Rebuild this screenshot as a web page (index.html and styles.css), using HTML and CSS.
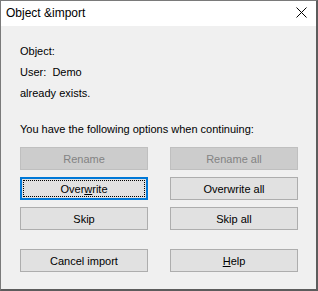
FILE: index.html
```html
<!DOCTYPE html>
<html lang="en">
<head>
  <meta charset="UTF-8">
  <title>Object &amp;import</title>
  <link rel="stylesheet" href="styles.css">
</head>
<body>
  <div class="window">
    <div class="titlebar">
      <span class="title">Object &amp;import</span>
      <svg class="close" width="11" height="11" viewBox="0 0 11 11">
        <path d="M0.5 0.5 L10.5 10.5 M10.5 0.5 L0.5 10.5" stroke="#000" stroke-width="1" fill="none"/>
      </svg>
    </div>

    <div class="content">
      <p class="line">Object:</p>
      <p class="line">User:&nbsp; Demo</p>
      <p class="line">already exists.</p>

      <p class="line options">You have the following options when continuing:</p>

      <div class="buttons">
        <button class="btn" disabled>Rename</button>
        <button class="btn" disabled>Rename all</button>
        <button class="btn focused"><span class="focus-ring">Over<u>w</u>rite</span></button>
        <button class="btn">Overwrite all</button>
        <button class="btn">Skip</button>
        <button class="btn">Skip all</button>
      </div>

      <div class="buttons bottom">
        <button class="btn">Cancel import</button>
        <button class="btn"><u>H</u>elp</button>
      </div>
    </div>
  </div>
</body>
</html>
```

FILE: styles.css
```css
body {
  margin: 0;
  padding: 0;
  background: #f0f0f0;
  font-family: 'Liberation Sans', Arial, sans-serif;
}

.window {
  width: 318px;
  height: 291px;
  box-sizing: border-box;
  border-top: 1px solid #7a7a7a;
  border-left: 1px solid #7a7a7a;
  border-right: 2px solid #5c5c5c;
  border-bottom: 2px solid #5c5c5c;
  background: #f0f0f0;
}

.titlebar {
  height: 25px;
  background: #fff;
  display: flex;
  align-items: center;
  justify-content: space-between;
  padding: 0 9px 0 5px;
}

.title {
  font-size: 12px;
  color: #000;
  margin-top: -1px;
}

.close {
  display: block;
  margin-top: -2px;
}

.content {
  padding: 15px 17px 0 19px;
}

.line {
  margin: 0;
  font-size: 11px;
  line-height: 21px;
  color: #000;
}

.options {
  margin-top: 15px;
}

.buttons {
  display: grid;
  grid-template-columns: 128px 128px;
  column-gap: 22px;
  row-gap: 7px;
  margin-top: 7px;
}

.buttons.bottom {
  margin-top: 19px;
}

.btn {
  height: 23px;
  padding: 0;
  font-family: inherit;
  font-size: 11px;
  color: #000;
  background: #e1e1e1;
  border: 1px solid #adadad;
  border-radius: 0;
  display: flex;
  align-items: center;
  justify-content: center;
}

.btn:disabled {
  background: #cccccc;
  border-color: #bfbfbf;
  color: #838383;
}

.btn.focused {
  border: 2px solid #0078d7;
  padding: 1px;
}

.focus-ring {
  flex: 1;
  align-self: stretch;
  display: flex;
  align-items: center;
  justify-content: center;
  border: 1px dotted #000;
}
```
